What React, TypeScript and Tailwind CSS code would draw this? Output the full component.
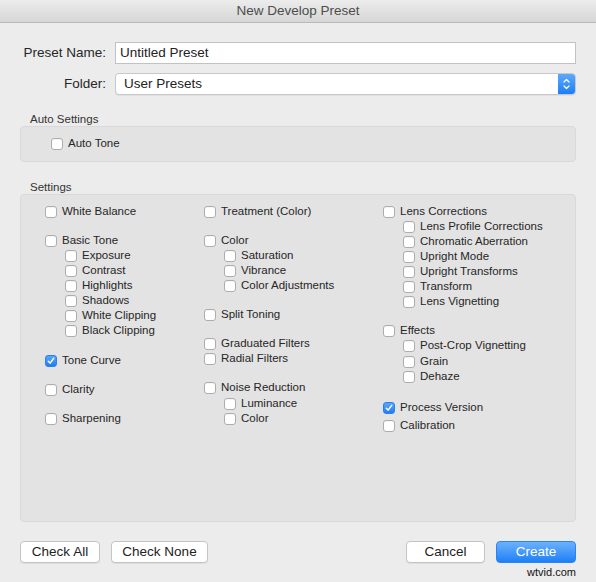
import React from "react";

type Item = { label: string; sub?: boolean; mt?: string; checked?: boolean };

const col1: Item[] = [
  { label: "White Balance" },
  { label: "Basic Tone", mt: "mt-[14px]" },
  { label: "Exposure", sub: true },
  { label: "Contrast", sub: true },
  { label: "Highlights", sub: true },
  { label: "Shadows", sub: true },
  { label: "White Clipping", sub: true },
  { label: "Black Clipping", sub: true },
  { label: "Tone Curve", mt: "mt-[15px]", checked: true },
  { label: "Clarity", mt: "mt-[14px]" },
  { label: "Sharpening", mt: "mt-[14px]" },
];

const col2: Item[] = [
  { label: "Treatment (Color)" },
  { label: "Color", mt: "mt-[14px]" },
  { label: "Saturation", sub: true },
  { label: "Vibrance", sub: true },
  { label: "Color Adjustments", sub: true },
  { label: "Split Toning", mt: "mt-[14px]" },
  { label: "Graduated Filters", mt: "mt-[14px]" },
  { label: "Radial Filters" },
  { label: "Noise Reduction", mt: "mt-[14px]" },
  { label: "Luminance", sub: true, mt: "mt-[1px]" },
  { label: "Color", sub: true },
];

const col3: Item[] = [
  { label: "Lens Corrections" },
  { label: "Lens Profile Corrections", sub: true },
  { label: "Chromatic Aberration", sub: true },
  { label: "Upright Mode", sub: true },
  { label: "Upright Transforms", sub: true },
  { label: "Transform", sub: true },
  { label: "Lens Vignetting", sub: true },
  { label: "Effects", mt: "mt-[14px]" },
  { label: "Post-Crop Vignetting", sub: true },
  { label: "Grain", sub: true, mt: "mt-[1px]" },
  { label: "Dehaze", sub: true },
  { label: "Process Version", mt: "mt-[16px]", checked: true },
  { label: "Calibration", mt: "mt-[3px]" },
];

function Box({ checked }: { checked?: boolean }) {
  if (checked) {
    return (
      <span className="flex h-[12px] w-[12px] shrink-0 items-center justify-center rounded-[3px] border border-[#2f7fe6] bg-gradient-to-b from-[#5aa6fb] to-[#1b7ef5]">
        <svg width="8" height="8" viewBox="0 0 8 8">
          <path d="M1.3 4.2 L3.1 6.1 L6.7 1.4" fill="none" stroke="white" strokeWidth="1.5" strokeLinecap="round" strokeLinejoin="round" />
        </svg>
      </span>
    );
  }
  return (
    <span className="block h-[12px] w-[12px] shrink-0 rounded-[3px] border border-[#adadad] bg-white shadow-[inset_0_1px_0_rgba(0,0,0,0.04)]" />
  );
}

function Row({ item }: { item: Item }) {
  return (
    <div className={`flex h-[15px] items-center gap-[5px] ${item.sub ? "pl-[20px]" : ""} ${item.mt ?? ""}`}>
      <Box checked={item.checked} />
      <span className="whitespace-nowrap leading-none">{item.label}</span>
    </div>
  );
}

function Col({ items }: { items: Item[] }) {
  return (
    <div className="flex flex-col">
      {items.map((it, i) => (
        <Row key={i} item={it} />
      ))}
    </div>
  );
}

function Button({ children, w, primary }: { children: React.ReactNode; w: string; primary?: boolean }) {
  return (
    <div
      className={`flex h-[22px] items-center justify-center rounded-[4px] text-[13.5px] ${w} ${
        primary
          ? "border border-[#2a84f4] bg-gradient-to-b from-[#6ab1fb] to-[#1a7ff7] text-white"
          : "border border-[#c4c4c4] bg-white text-[#222] shadow-[0_1px_0_rgba(0,0,0,0.06)]"
      }`}
    >
      {children}
    </div>
  );
}

export default function App() {
  return (
    <div
      className="flex h-[582px] w-[596px] flex-col bg-[#ececec] text-[#262626]"
      style={{ fontFamily: '"Liberation Sans", Arial, sans-serif' }}
    >
      <div className="flex h-[23px] shrink-0 items-center justify-center border-b border-[#b9b9b9] bg-gradient-to-b from-[#ececec] to-[#d6d6d6] text-[13.5px] text-[#4d4d4d]">
        New Develop Preset
      </div>

      <div className="flex flex-col px-[20px]">
        <div className="mt-[19px] grid grid-cols-[86px_1fr] items-center gap-x-[9px] gap-y-[9px] text-[13.5px]">
          <div className="text-right">Preset Name:</div>
          <div className="flex h-[22px] items-center border border-[#c2c2c2] bg-white px-[4px] text-[#222]">
            Untitled Preset
          </div>
          <div className="text-right">Folder:</div>
          <div className="flex h-[22px] items-stretch overflow-hidden rounded-[4px] border border-[#c8c8c8] bg-white shadow-[0_1px_0_rgba(0,0,0,0.05)]">
            <div className="flex flex-1 items-center px-[8px] text-[#222]">User Presets</div>
            <div className="flex w-[17px] items-center justify-center bg-gradient-to-b from-[#5aa9fb] to-[#1a7ef6]">
              <svg width="9" height="14" viewBox="0 0 9 14">
                <path d="M2 5 L4.5 2.5 L7 5" fill="none" stroke="white" strokeWidth="1.3" strokeLinecap="round" strokeLinejoin="round" />
                <path d="M2 9 L4.5 11.5 L7 9" fill="none" stroke="white" strokeWidth="1.3" strokeLinecap="round" strokeLinejoin="round" />
              </svg>
            </div>
          </div>
        </div>

        <div className="mt-[18px] pl-[10px] text-[11.5px] leading-[13px] text-[#333]">Auto Settings</div>
        <div className="flex h-[36px] items-center rounded-[4px] border border-[#d9d9d9] bg-[#e3e3e3] pl-[30px] text-[11.5px]">
          <Row item={{ label: "Auto Tone" }} />
        </div>

        <div className="mt-[19px] pl-[10px] text-[11.5px] leading-[13px] text-[#333]">Settings</div>
        <div className="h-[328px] rounded-[4px] border border-[#d9d9d9] bg-[#e3e3e3] pl-[24px] pt-[9px] text-[11.5px]">
          <div className="grid grid-cols-[159px_179px_179px]">
            <Col items={col1} />
            <Col items={col2} />
            <Col items={col3} />
          </div>
        </div>

        <div className="mt-[19px] flex items-center">
          <Button w="w-[80px]">Check All</Button>
          <div className="w-[11px]" />
          <Button w="w-[97px]">Check None</Button>
          <div className="flex-1" />
          <Button w="w-[79px]">Cancel</Button>
          <div className="w-[11px]" />
          <Button w="w-[80px]" primary>
            Create
          </Button>
        </div>
        <div className="mt-[4px] text-right text-[11px] leading-[11px] text-[#111]">wtvid.com</div>
      </div>
    </div>
  );
}
